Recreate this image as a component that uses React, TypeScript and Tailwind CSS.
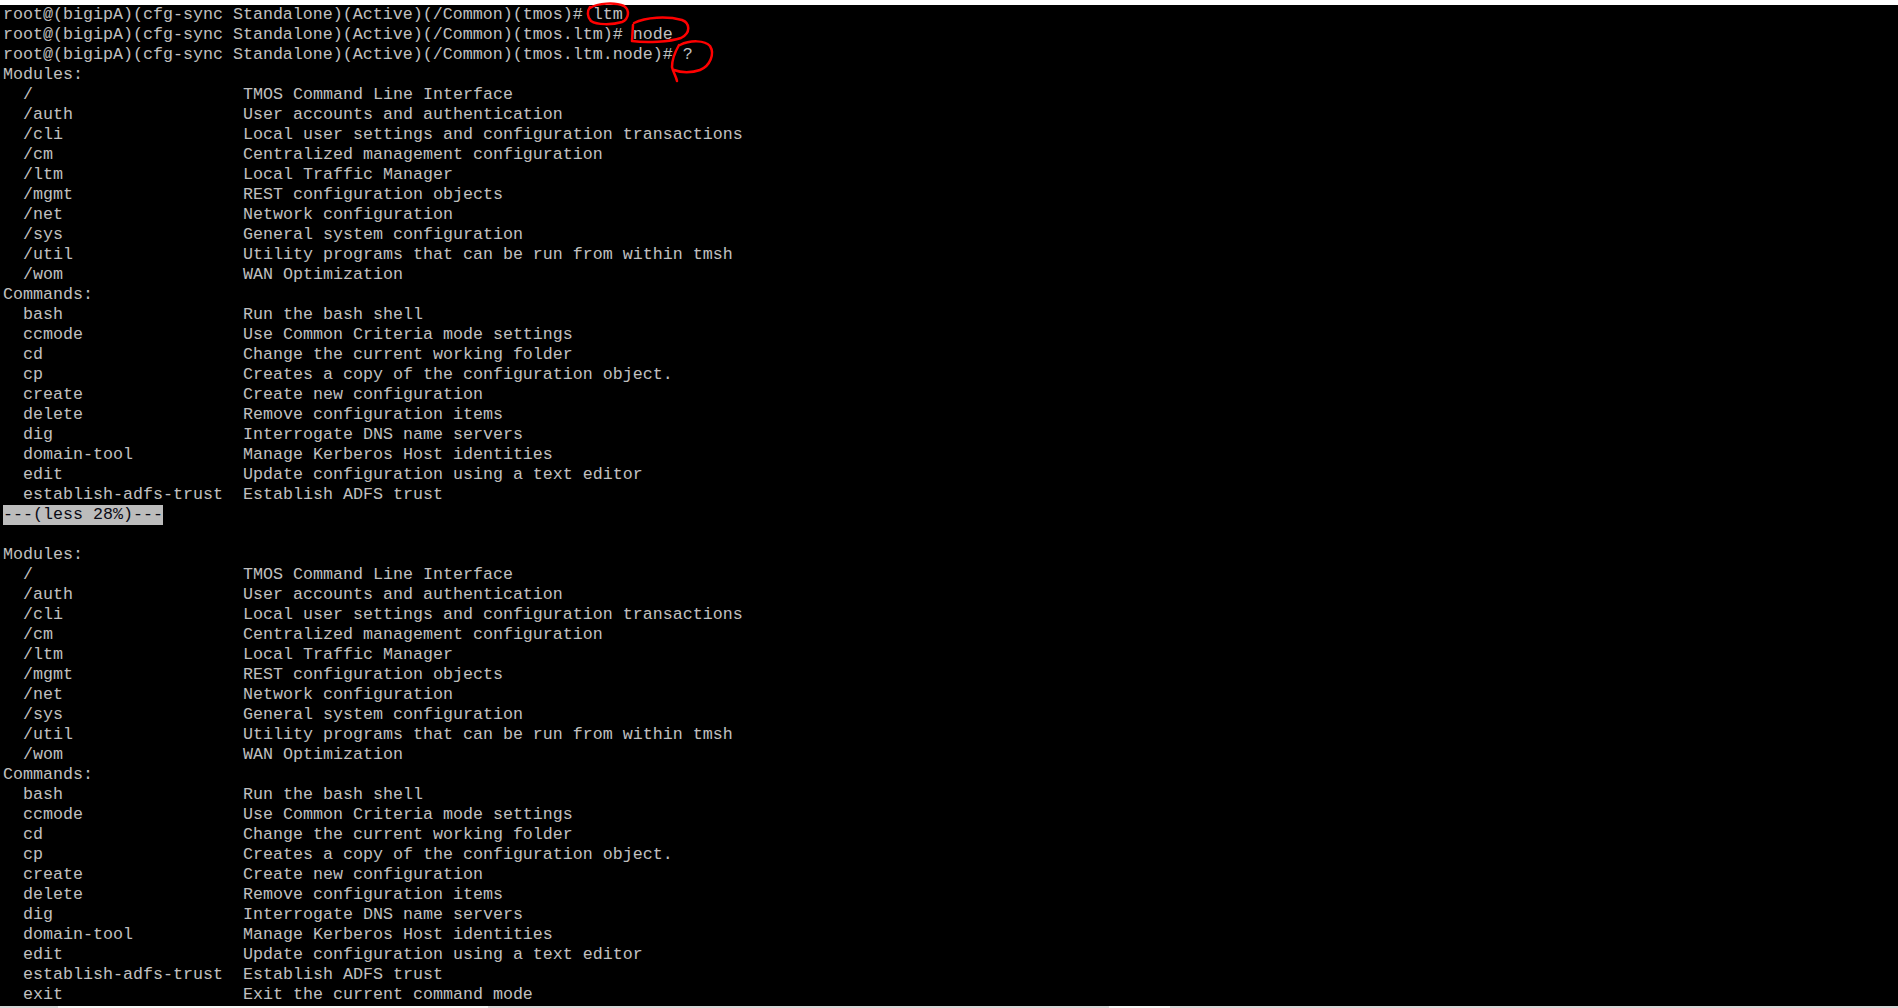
const PROMPTS = [
  'root@(bigipA)(cfg-sync Standalone)(Active)(/Common)(tmos)# ltm',
  'root@(bigipA)(cfg-sync Standalone)(Active)(/Common)(tmos.ltm)# node',
  'root@(bigipA)(cfg-sync Standalone)(Active)(/Common)(tmos.ltm.node)# ?',
];

const MODULES: [string, string][] = [
  ['/', 'TMOS Command Line Interface'],
  ['/auth', 'User accounts and authentication'],
  ['/cli', 'Local user settings and configuration transactions'],
  ['/cm', 'Centralized management configuration'],
  ['/ltm', 'Local Traffic Manager'],
  ['/mgmt', 'REST configuration objects'],
  ['/net', 'Network configuration'],
  ['/sys', 'General system configuration'],
  ['/util', 'Utility programs that can be run from within tmsh'],
  ['/wom', 'WAN Optimization'],
];

const COMMANDS: [string, string][] = [
  ['bash', 'Run the bash shell'],
  ['ccmode', 'Use Common Criteria mode settings'],
  ['cd', 'Change the current working folder'],
  ['cp', 'Creates a copy of the configuration object.'],
  ['create', 'Create new configuration'],
  ['delete', 'Remove configuration items'],
  ['dig', 'Interrogate DNS name servers'],
  ['domain-tool', 'Manage Kerberos Host identities'],
  ['edit', 'Update configuration using a text editor'],
  ['establish-adfs-trust', 'Establish ADFS trust'],
];

function Line({ children }: { children?: React.ReactNode }) {
  return <div className="h-[20px] leading-[20px] whitespace-pre">{children}</div>;
}

function Entry({ name, desc }: { name: string; desc: string }) {
  return (
    <div className="flex h-[20px] leading-[20px] whitespace-pre">
      <span className="w-[240px] shrink-0 pl-[20px]">{name}</span>
      <span>{desc}</span>
    </div>
  );
}

function HelpBlock({ commands }: { commands: [string, string][] }) {
  return (
    <>
      <Line>Modules:</Line>
      {MODULES.map(([n, d]) => (
        <Entry key={n} name={n} desc={d} />
      ))}
      <Line>Commands:</Line>
      {commands.map(([n, d]) => (
        <Entry key={n} name={n} desc={d} />
      ))}
    </>
  );
}

export default function App() {
  return (
    <div className="relative w-[1898px] h-[1008px] overflow-hidden bg-black flex flex-col">
      <div className="h-[5px] bg-white shrink-0" />
      <div
        className="flex-1 pl-[3px] text-[16.66px] text-[#c0c0c0]"
        style={{ fontFamily: '"Liberation Mono", "Courier New", monospace' }}
      >
        {PROMPTS.map((p) => (
          <Line key={p}>{p}</Line>
        ))}
        <HelpBlock commands={COMMANDS} />
        <Line>
          <span className="inline-block bg-[#bcbcbc] text-[#0a0a14]">---(less 28%)---</span>
        </Line>
        <Line />
        <HelpBlock commands={[...COMMANDS, ['exit', 'Exit the current command mode']]} />
      </div>
      <div className="flex h-[2px] shrink-0 bg-[#d6d6d6]">
        <div className="ml-[58px] w-[430px] bg-[#f4f4f4]" />
        <div className="ml-[621px] w-[61px] bg-[#f4f4f4]" />
      </div>

      {/* red pen marks drawn over the screenshot */}
      <svg
        className="absolute left-0 top-0 pointer-events-none"
        width="760"
        height="100"
        fill="none"
        stroke="#ff0000"
        strokeWidth="2.5"
        strokeLinecap="round"
        strokeLinejoin="round"
      >
        <path d="M590 8 C598 3 615 2 624 6 C630 10 629 19 622 22 C612 25 597 25 591 21 C587 17 587 11 590 7" />
        <path d="M633 25 L632 41 C646 43 670 42 681 38 C691 33 690 23 682 20 C667 16 646 17 634 23" />
        <path d="M680 45 C690 40 705 40 710 46 C715 54 710 66 700 70 C692 73 681 73 674 70" />
        <path d="M679 45 C675 52 672 60 672 67 C673 72 676 76 677 81" />
      </svg>
    </div>
  );
}
